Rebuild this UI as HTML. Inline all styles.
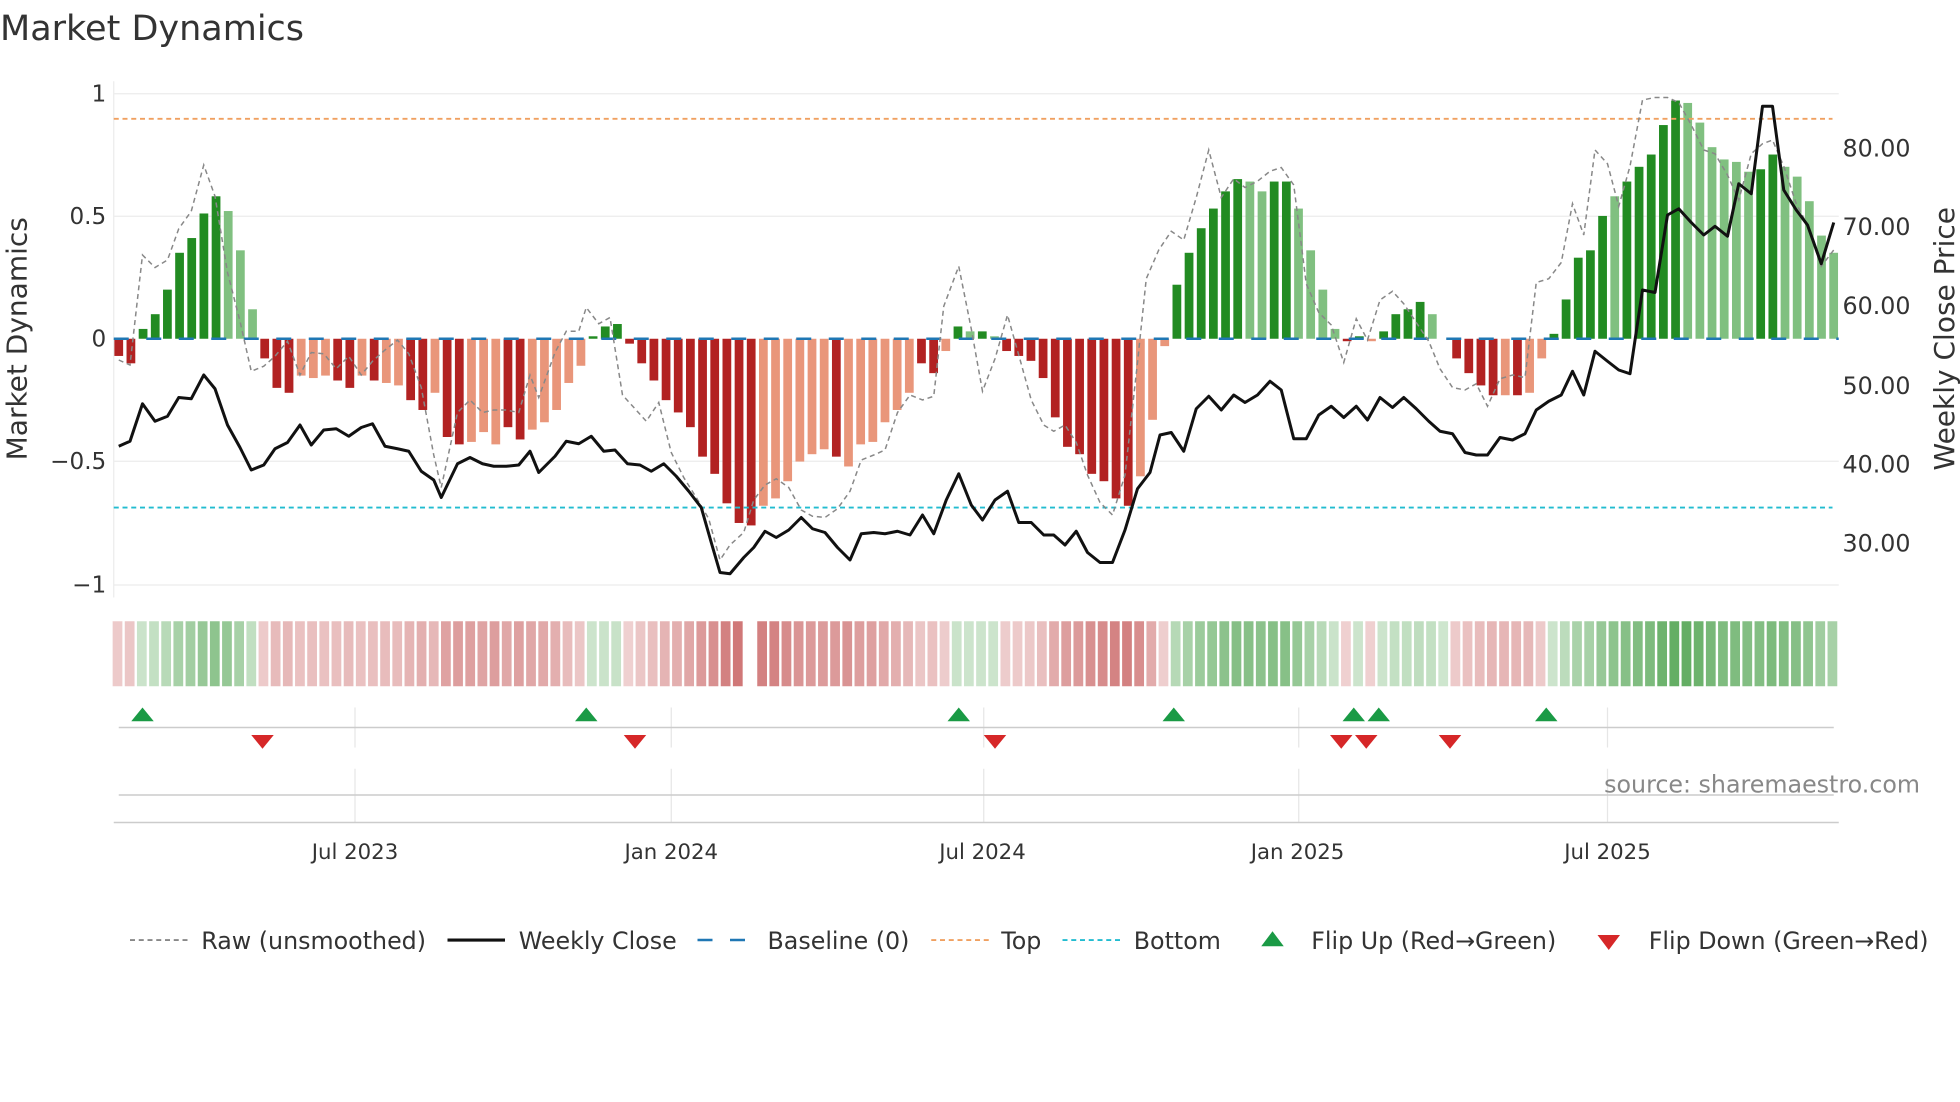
<!DOCTYPE html>
<html><head><meta charset="utf-8"><style>
html,body{margin:0;padding:0;background:#fff;width:1960px;height:1102px;overflow:hidden}
svg{display:block;font-family:"DejaVu Sans","Liberation Sans",sans-serif}
</style></head><body>
<svg id="s" width="1960" height="1102" viewBox="0 0 1568 881.6" xmlns="http://www.w3.org/2000/svg">
<text x="0" y="32" font-size="28" fill="#333">Market Dynamics</text>
<g stroke="#ececec" stroke-width="1">
<line x1="91" y1="75" x2="1471" y2="75"/><line x1="91" y1="173" x2="1471" y2="173"/><line x1="91" y1="369" x2="1471" y2="369"/><line x1="91" y1="468" x2="1471" y2="468"/>
<line x1="91" y1="65" x2="91" y2="478"/>
</g>
<g font-size="18.5" fill="#333" text-anchor="end">
<text x="85" y="81">1</text><text x="85" y="179">0.5</text><text x="85" y="277">0</text><text x="85" y="375">−0.5</text><text x="85" y="474">−1</text>
</g>
<g font-size="19" fill="#333">
<text x="1474" y="125">80.00</text><text x="1474" y="188">70.00</text><text x="1474" y="251">60.00</text><text x="1474" y="315">50.00</text><text x="1474" y="378">40.00</text><text x="1474" y="441">30.00</text>
</g>
<text transform="translate(21,271) rotate(-90)" font-size="22.4" fill="#333" text-anchor="middle">Market Dynamics</text>
<text transform="translate(1563,271) rotate(-90)" font-size="22.4" fill="#333" text-anchor="middle">Weekly Close Price</text>
<g id="bars"></g>
<line x1="91" y1="95" x2="1466" y2="95" stroke="#f0a060" stroke-width="1.5" stroke-dasharray="4,3"/>
<line x1="91" y1="406" x2="1466" y2="406" stroke="#22bcd0" stroke-width="1.5" stroke-dasharray="4,3"/>
<line x1="91" y1="271" x2="1471" y2="271" stroke="#1f77b4" stroke-width="2" stroke-dasharray="12,14"/>
<path id="raw" fill="none" stroke="#888" stroke-width="1.2" stroke-dasharray="4,3"/>
<path id="px" fill="none" stroke="#111" stroke-width="2.4" stroke-linejoin="round"/>
<g id="strip"></g>
<g stroke="#e6e6e6" stroke-width="1">
<line x1="284" y1="566" x2="284" y2="598"/><line x1="537" y1="566" x2="537" y2="598"/><line x1="787" y1="566" x2="787" y2="598"/><line x1="1039" y1="566" x2="1039" y2="598"/><line x1="1286" y1="566" x2="1286" y2="598"/>
<line x1="284" y1="615" x2="284" y2="658"/><line x1="537" y1="615" x2="537" y2="658"/><line x1="787" y1="615" x2="787" y2="658"/><line x1="1039" y1="615" x2="1039" y2="658"/><line x1="1286" y1="615" x2="1286" y2="658"/>
</g>
<line x1="95" y1="582" x2="1467" y2="582" stroke="#ccc" stroke-width="1.2"/>
<line x1="95" y1="636" x2="1467" y2="636" stroke="#ccc" stroke-width="1.2"/>
<line x1="91" y1="658" x2="1471" y2="658" stroke="#ccc" stroke-width="1.2"/>
<g id="mk"></g>
<text x="1536" y="634" font-size="19" fill="#888" text-anchor="end">source: sharemaestro.com</text>
<g font-size="17" fill="#333" text-anchor="middle">
<text x="284" y="687">Jul 2023</text><text x="537" y="687">Jan 2024</text><text x="786" y="687">Jul 2024</text><text x="1038" y="687">Jan 2025</text><text x="1286" y="687">Jul 2025</text>
</g>
<g font-size="19" fill="#333">
<line x1="104" y1="752" x2="150" y2="752" stroke="#888" stroke-width="1.5" stroke-dasharray="4,3"/><text x="161" y="759">Raw (unsmoothed)</text>
<line x1="358" y1="752" x2="404" y2="752" stroke="#111" stroke-width="2.5"/><text x="415" y="759">Weekly Close</text>
<line x1="558" y1="752" x2="604" y2="752" stroke="#1f77b4" stroke-width="2" stroke-dasharray="12,14"/><text x="614" y="759">Baseline (0)</text>
<line x1="745" y1="752" x2="791" y2="752" stroke="#f0a060" stroke-width="1.5" stroke-dasharray="4,3"/><text x="801" y="759">Top</text>
<line x1="850" y1="752" x2="896" y2="752" stroke="#22bcd0" stroke-width="1.5" stroke-dasharray="4,3"/><text x="907" y="759">Bottom</text>
<polygon points="1009,757 1027,757 1018,745" fill="#1a9a45"/><text x="1049" y="759">Flip Up (Red→Green)</text>
<polygon points="1278,748 1296,748 1287,760" fill="#d62728"/><text x="1319" y="759">Flip Down (Green→Red)</text>
</g>
</svg>
<script>
var V="-0.07D -0.1D 0.04G 0.1G 0.2G 0.35G 0.41G 0.51G 0.58G 0.52g 0.36g 0.12g -0.08D -0.2D -0.22D -0.15L -0.16L -0.15L -0.17D -0.2D -0.15L -0.17D -0.18L -0.19L -0.25D -0.29D -0.22L -0.4D -0.43D -0.42L -0.38L -0.43L -0.36D -0.41D -0.37L -0.34L -0.29L -0.18L -0.11L 0.01G 0.05G 0.06G -0.02D -0.1D -0.17D -0.25D -0.3D -0.36D -0.48D -0.55D -0.67D -0.75D -0.76D -0.68L -0.65L -0.58L -0.5L -0.47L -0.45L -0.48D -0.52L -0.43L -0.42L -0.34L -0.29L -0.22L -0.1D -0.14D -0.05L 0.05G 0.03g 0.03G 0.01g -0.05D -0.07D -0.09D -0.16D -0.32D -0.44D -0.47D -0.55D -0.58D -0.65D -0.68D -0.56L -0.33L -0.03L 0.22G 0.35G 0.45G 0.53G 0.6G 0.65G 0.64g 0.6g 0.64G 0.64G 0.53g 0.36g 0.2g 0.04g -0.01D 0.01G -0.01L 0.03G 0.1G 0.12G 0.15G 0.1g 0.0g -0.08D -0.14D -0.19D -0.23D -0.23L -0.23D -0.22L -0.08L 0.02G 0.16G 0.33G 0.36G 0.5G 0.58g 0.64G 0.7G 0.75G 0.87G 0.97G 0.96g 0.88g 0.78g 0.73g 0.72g 0.68g 0.69G 0.75G 0.7g 0.66g 0.56g 0.42g 0.35g".split(" ");
var C={D:"#b22222",L:"#e9967a",G:"#228b22",g:"#80c080"};
var b="",st="",P=9.73;
V.forEach(function(s,i){var v=parseFloat(s),c=s.slice(-1),x=95+i*P,h=Math.abs(v)*196.5,y=v>=0?271-h:271;
b+='<rect x="'+(x-3.5)+'" y="'+y+'" width="7" height="'+h+'" fill="'+C[c]+'"/>';
if(i==52)return;
var a=0.2+0.55*Math.min(1,Math.abs(v)),col=v>=0?"34,139,34":"178,34,34";
if(v>=0)a=0.22+0.5*Math.abs(v);
st+='<rect x="'+(x-4.9)+'" y="497" width="7.8" height="52" fill="rgba('+col+','+a.toFixed(2)+')"/>';});
document.getElementById("bars").innerHTML=b;document.getElementById("strip").innerHTML=st;
var px="95,357 104,353 114,323 124,337 134,333 143,318 153,319 163,300 172,311 182,340 192,358 201,376 211,372 220,359 230,354 240,340 249,356 259,344 269,343 279,349 289,342 298,339 308,357 318,359 327,361 337,377 347,384 353,398 366,371 376,366 386,371 395,373 405,373 415,372 424,361 431,378 444,365 453,353 463,355 473,349 483,361 492,360 502,371 512,372 521,377 531,371 541,381 551,393 561,406 569,434 576,458 584,459 595,446 603,438 612,425 621,430 631,424 641,414 650,423 660,426 670,438 680,448 689,427 699,426 708,427 718,425 728,428 738,412 747,427 757,400 767,379 777,404 786,416 796,400 806,393 815,418 825,418 835,428 843,428 852,436 861,425 870,442 880,450 890,450 900,424 910,391 920,378 928,348 937,346 947,361 957,327 967,317 977,328 987,316 996,322 1006,316 1016,305 1025,312 1035,351 1045,351 1055,332 1065,325 1075,334 1085,325 1094,336 1104,318 1114,326 1123,318 1133,327 1143,337 1152,345 1162,347 1172,362 1181,364 1190,364 1200,350 1210,352 1220,347 1229,328 1239,321 1249,316 1258,297 1267,316 1276,281 1286,289 1295,296 1304,299 1314,232 1324,234 1334,172 1343,167 1353,178 1363,188 1372,181 1382,189 1391,147 1401,155 1410,85 1418,85 1427,152 1437,168 1446,180 1457,211 1467,178";
var raw="95,288 104,292 114,204 124,214 134,208 143,183 153,169 163,132 172,157 182,218 192,257 201,297 211,293 220,285 230,273 240,300 249,282 259,283 269,295 279,285 289,300 298,289 308,280 318,272 327,283 337,310 347,364 353,390 366,330 376,320 386,330 395,328 405,328 415,330 424,300 431,318 444,282 453,265 463,265 469,246 479,259 488,254 498,316 508,327 517,337 527,322 537,362 547,382 557,398 567,415 576,448 584,436 595,426 603,400 612,388 621,383 631,390 641,408 650,413 660,414 670,407 680,393 689,368 699,364 708,360 718,330 728,316 738,320 747,317 755,245 767,213 777,263 786,313 796,287 806,252 815,284 825,320 835,340 843,345 852,340 861,354 870,380 880,402 890,412 900,380 910,290 917,223 927,200 937,185 947,192 957,158 967,120 977,158 987,143 996,150 1006,145 1016,137 1025,134 1035,148 1045,227 1055,250 1065,260 1075,290 1085,255 1094,272 1104,240 1114,233 1123,243 1133,258 1143,273 1152,295 1162,310 1172,312 1181,307 1190,325 1200,303 1210,300 1220,302 1229,226 1239,223 1249,210 1258,163 1267,188 1276,120 1286,131 1295,165 1304,133 1314,80 1324,78 1334,78 1343,82 1353,100 1363,120 1372,123 1382,140 1391,160 1401,123 1410,115 1418,112 1427,133 1437,163 1446,180 1457,213 1467,200";
document.getElementById("px").setAttribute("d","M"+px.replace(/ /g," L"));
document.getElementById("raw").setAttribute("d","M"+raw.replace(/ /g," L"));
var m="";[114,469,767,939,1083,1103,1237].forEach(function(x){m+='<polygon points="'+(x-9)+',577 '+(x+9)+',577 '+x+',566" fill="#1a9a45"/>';});
[210,508,796,1073,1093,1160].forEach(function(x){m+='<polygon points="'+(x-9)+',588 '+(x+9)+',588 '+x+',599" fill="#d62728"/>';});
document.getElementById("mk").innerHTML=m;
</script>
</body></html>
